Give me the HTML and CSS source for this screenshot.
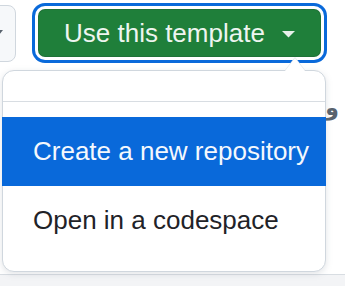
FILE: index.html
```html
<!DOCTYPE html>
<html>
<head>
<meta charset="utf-8">
<link rel="stylesheet" href="styles.css">
</head>
<body>
<div class="page">
  <div class="toolbar">
    <div class="side-btn">
      <svg class="side-caret" width="8" height="6" viewBox="0 0 8 6"><path d="M0 0h8L4 5z" fill="#59636e"/></svg>
    </div>
    <button class="primary-btn">
      <span class="label">Use this template</span>
      <svg class="caret" width="13" height="7" viewBox="0 0 13 7"><path d="M0 0h13L6.5 6.5z" fill="#e8f0ea"/></svg>
    </button>
  </div>
  <div class="bg-area">
    <div class="bg-row"><span class="bg-glyph">و</span></div>
  </div>
  <div class="footer"></div>

  <div class="menu">
    <div class="menu-arrow"></div>
    <div class="menu-header"></div>
    <div class="menu-list">
      <div class="menu-item active">Create a new repository</div>
      <div class="menu-item">Open in a codespace</div>
    </div>
  </div>
</div>
</body>
</html>
```
FILE: styles.css
```css
* { box-sizing: border-box; }
html, body {
  margin: 0;
  padding: 0;
  background: #ffffff;
  font-family: "Liberation Sans", Arial, sans-serif;
  overflow: hidden;
}
.page {
  position: relative;
  width: 345px;
  height: 286px;
  display: flex;
  flex-direction: column;
}
.toolbar {
  display: flex;
  align-items: center;
  height: 72px;
}
.side-btn {
  width: 40px;
  height: 57px;
  margin-left: -24px;
  margin-top: -6px;
  background: #f6f8fa;
  border: 1px solid #d0d7de;
  border-radius: 8px;
  display: flex;
  align-items: center;
  justify-content: flex-end;
  padding-right: 12px;
}
.side-caret { display: block; }
.primary-btn {
  margin-left: 22px;
  margin-top: -6px;
  width: 283px;
  height: 48px;
  background: #1f7f3a;
  border: 1px solid rgba(31, 35, 40, 0.15);
  border-radius: 7px;
  box-shadow: 0 0 0 3px #ffffff, 0 0 0 6px #0969da;
  color: #eef5f0;
  font-family: "Liberation Sans", Arial, sans-serif;
  font-size: 26px;
  display: flex;
  align-items: center;
  padding: 0 0 0 25px;
}
.label { line-height: 1; }
.caret { margin-left: 17px; margin-top: 2px; display: block; }
.bg-area {
  flex: 1;
  padding-top: 25px;
}
.bg-row {
  display: flex;
  justify-content: flex-end;
  padding-right: 6px;
}
.bg-glyph {
  font-family: "DejaVu Sans", sans-serif;
  font-size: 22px;
  font-weight: bold;
  line-height: 1;
  color: #59636e;
}
.footer {
  height: 12px;
  border-top: 1px solid #d8dde2;
  background: #f3f4f6;
}
.menu {
  position: absolute;
  left: 2px;
  top: 70px;
  width: 324px;
  height: 202px;
  background: #ffffff;
  border: 1px solid #d0d7de;
  border-radius: 12px;
  box-shadow: 0 2px 6px rgba(140, 149, 159, 0.25);
  display: flex;
  flex-direction: column;
}
.menu-arrow {
  position: absolute;
  top: -13px;
  right: 20px;
  width: 0;
  height: 0;
  border-left: 10px solid transparent;
  border-right: 10px solid transparent;
  border-bottom: 13px solid #ffffff;
  filter: drop-shadow(0 -1px 0 #e3e6ea);
}
.menu-header {
  height: 31px;
  border-bottom: 1px solid #d8dde2;
}
.menu-list {
  padding-top: 15px;
  display: flex;
  flex-direction: column;
}
.menu-item {
  height: 69px;
  display: flex;
  align-items: center;
  padding-left: 30px;
  font-size: 26px;
  color: #1f2328;
}
.menu-item.active {
  background: #0969da;
  color: #f4f8fd;
  margin: 0 -1px;
  padding-left: 31px;
}
```
